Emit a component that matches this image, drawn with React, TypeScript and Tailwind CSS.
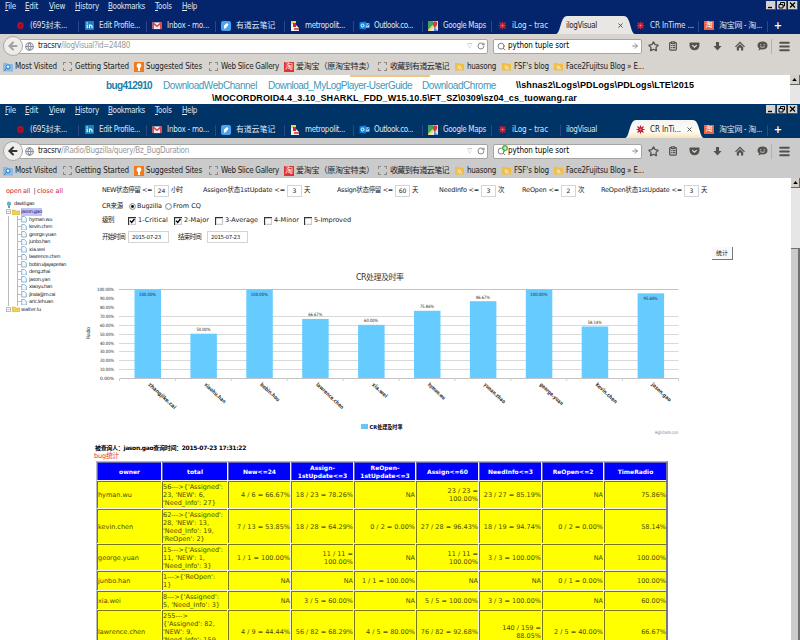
import React, { useLayoutEffect, useRef, useState } from "react";
import {
  Star,
  ClipboardList,
  Menu,
  Search,
  RotateCw,
  ArrowRight,
  ArrowLeft,
  Globe,
  X,
} from "lucide-react";

const UI = "font-['DejaVu_Sans_Condensed','DejaVu_Sans','Noto_Sans_CJK_SC',sans-serif]";
const VERDANA = "font-['DejaVu_Sans','Noto_Sans_CJK_SC',sans-serif]";

/* One line of text whose tracking is adjusted so that it fills a given width. */
function Fit({ w, children, className = "" }: { w: number; children: string; className?: string }) {
  const ref = useRef<HTMLSpanElement>(null);
  const [gap, setGap] = useState(0);
  useLayoutEffect(() => {
    const el = ref.current;
    if (el) setGap((w - el.getBoundingClientRect().width) / children.length);
  }, [w, children]);
  return (
    <span className={`block shrink-0 whitespace-pre ${className}`} style={{ width: w }}>
      <span ref={ref} className="inline-block" style={{ letterSpacing: gap }}>
        {children}
      </span>
    </span>
  );
}

function TabIcon({ kind }: { kind: string }) {
  switch (kind) {
    case "weibo":
      return (
        <svg viewBox="0 0 10 10" className="h-[9px] w-[9px]">
          <path d="M2 2 4 1l4 1 .5 3L8 8 5 9.3 2 8 1.5 5z" fill="#b3122a" />
          <path d="M3.5 4.5h3M4 7h2" stroke="#5e0a30" />
        </svg>
      );
    case "linkedin":
      return (
        <svg viewBox="0 0 10 10" className="h-[9px] w-[9px]">
          <rect width="10" height="10" rx="1" fill="#1583bb" />
          <path d="M2.4 4v4M5 8V4M5 6q0-1.6 1.4-1.6T7.8 6v2" stroke="#fff" strokeWidth="1.3" fill="none" />
          <circle cx="2.4" cy="2.2" r=".8" fill="#fff" />
        </svg>
      );
    case "mail":
      return (
        <svg viewBox="0 0 10 10" className="h-[9px] w-[10px]">
          <rect y="1.5" width="10" height="7.5" fill="#f4e9ea" />
          <path d="M.8 9V2.4L5 6l4.200-3.600V9" stroke="#d8424a" strokeWidth="1.6" fill="none" />
        </svg>
      );
    case "note":
      return (
        <svg viewBox="0 0 10 10" className="h-[10px] w-[10px]">
          <rect width="10" height="10" rx="2" fill="#4aa3f0" />
          <path d="M3 8V4.500L6 2l1.500 1.500L5 7z" fill="#fff" />
        </svg>
      );
    case "metro":
      return (
        <svg viewBox="0 0 10 10" className="h-[10px] w-[10px]">
          <path d="M1 0h5v4H1z" fill="#e9d64a" />
          <path d="M1 3h4l4 4v3H1z" fill="#f5f0f0" />
          <path d="M3 2h3v4H3z" fill="#d22a2a" />
          <path d="M4 8h5" stroke="#c33" strokeWidth="1.500" />
        </svg>
      );
    case "outlook":
      return (
        <svg viewBox="0 0 11 10" className="h-[9px] w-[11px]">
          <path d="M6 2.500h5v5H6z" fill="#9ed0f5" />
          <path d="M6 3l2.500 2L11 3" stroke="#0a5aa8" fill="none" />
          <path d="M0 1.500 7 .500v9l-7-1z" fill="#1384dc" />
          <circle cx="3.400" cy="5" r="1.600" stroke="#fff" strokeWidth="1.100" fill="none" />
        </svg>
      );
    case "maps":
      return (
        <svg viewBox="0 0 10 10" className="h-[10px] w-[10px]">
          <rect width="10" height="10" fill="#e9e6dc" />
          <path d="M0 0h5v5L0 9z" fill="#43a35c" />
          <path d="M0 10 9 1" stroke="#f0d257" strokeWidth="1.800" />
          <path d="M6 10V6l4 4z" fill="#5a8fe0" />
          <circle cx="7" cy="2.600" r="2.300" fill="#da3b35" />
          <path d="M5.200 4h3.600L7 7.500z" fill="#da3b35" />
        </svg>
      );
    case "paw":
      return (
        <svg viewBox="0 0 10 10" className="h-[9px] w-[9px]">
          <path d="M5 .5v9M.5 5h9M1.700 1.700l6.600 6.600M8.300 1.700l-6.600 6.600" stroke="#b5233c" strokeWidth="1.300" />
          <circle cx="5" cy="5" r="2.800" fill="#c32a3e" />
          <circle cx="5" cy="5" r=".8" fill="#e8a0a8" />
        </svg>
      );
    case "taobao":
      return (
        <span className="flex h-[9px] w-[10px] items-center justify-center bg-[#ee6244] text-[7px] leading-none text-white">淘</span>
      );
    default:
      return null;
  }
}

const TABS: [string, string, number, number][] = [
  ["weibo", "(695封未...", 37, 69],
  ["linkedin", "Edit Profile...", 41, 68],
  ["mail", "Inbox - mo...", 42, 69],
  ["note", "有道云笔记", 39, 69],
  ["metro", "metropolit...", 40, 69],
  ["outlook", "Outlook.co...", 39, 69],
  ["maps", "Google Maps", 43, 69],
  ["paw", "iLog – trac", 36, 69],
  ["", "ilogVisual", 31, 69],
  ["paw", "CR InTime ...", 44, 69],
  ["taobao", "淘宝网 - 淘...", 43, 69],
];

const MENUS: [string, number, number][] = [
  ["File", 11, 20],
  ["Edit", 13, 24],
  ["View", 16, 26],
  ["History", 24, 33],
  ["Bookmarks", 37, 47],
  ["Tools", 17, 27],
  ["Help", 15, 20],
];

function Chrome({ second = false }: { second?: boolean }) {
  const active = second ? 9 : 8;
  return (
    <header className={`w-full shrink-0 text-[8px] leading-[10px] ${UI} ${second ? "h-[74px]" : "h-[75px]"}`}>
      <div className={`h-[34px] text-[#dfe5f3] ${second ? "bg-[#003366]" : "bg-[#04246b]"}`}>
        <div className="flex h-[16px] items-start justify-between pl-[5px]">
          <div className="flex pt-[2px]">
            {MENUS.map(([t, w, cell]) => (
              <div key={t} style={{ width: cell }}>
                <Fit w={w} className="*:first-letter:underline">{t}</Fit>
              </div>
            ))}
          </div>
          <div className="flex gap-[1px] pt-[1px] pr-[2px] text-black">
            {[0, 1, 2].map((i) => (
              <svg key={i} viewBox="0 0 10 9" className="h-[9px] w-[10px]">
                <path d="M0 0h10v9H0z" fill="#d6d3ce" />
                <path d="M0 8.500h10M9.500 0v9" stroke="#555" />
                {i === 0 && <path d="M2 6.500h4" stroke="#000" strokeWidth="1.300" />}
                {i === 1 && <path d="M3.500 3V1.500h4v3.500H6M2 3.500h4V7H2z" stroke="#000" fill="none" />}
                {i === 2 && <path d="M2 1.500l5 5M7 1.500l-5 5" stroke="#000" strokeWidth="1.300" />}
              </svg>
            ))}
          </div>
        </div>
        <div className="flex h-[18px] pl-[10px]">
          {TABS.map(([kind, text, w, cell], i) => {
            const on = i === active;
            return (
              <div key={i} className="relative flex h-[18px] shrink-0 items-center pt-[1px]" style={{ width: cell }}>
                {on && (
                  <svg viewBox="0 0 78 18" preserveAspectRatio="none" className="absolute -left-[5px] top-0 h-[18px] w-[79px]">
                    <defs>
                      <linearGradient id="warmTab" x1="0" y1="0" x2="0" y2="1">
                        <stop offset="0" stopColor="#f4f4f4" />
                        <stop offset=".65" stopColor="#fdfcf6" />
                        <stop offset="1" stopColor="#fbe2b4" />
                      </linearGradient>
                    </defs>
                    <path d="M0 18C5 17 4 0 11 0H67C74 0 73 17 78 18z" fill={second ? "url(#warmTab)" : "#e9e7e4"} />
                  </svg>
                )}
                {!on && i !== active - 1 && <span className="absolute right-0 top-[5px] h-[11px] w-px bg-[#2b4788]" />}
                <span className={`relative flex shrink-0 items-center justify-center ${kind ? "w-[20px]" : "w-[5px]"}`}>
                  <TabIcon kind={kind} />
                </span>
                <Fit w={on && second ? 31 : w} className={`relative ${on ? "text-[#222]" : ""}`}>
                  {on && second ? "CR InTi..." : text}
                </Fit>
                {on && <X className="absolute right-[6px] top-[6px] h-[7px] w-[7px] text-[#444]" strokeWidth={3} />}
              </div>
            );
          })}
          <span className="flex w-[20px] items-center justify-center pt-[1px] text-[11px] font-bold text-white">+</span>
        </div>
      </div>

      <div className={second ? "h-[40px] bg-[#cbcbcb] pt-[1px]" : "h-[41px] bg-[#d7d4cf]"}>
        <div className="flex h-[24px] items-center pl-[3px]">
          <div className="z-10 flex h-[20px] w-[20px] items-center justify-center rounded-full border border-[#aaa8a4] bg-[#eeedeb]">
            <ArrowLeft className={`h-[12px] w-[12px] ${second ? "text-[#333]" : "text-[#a5a39f]"}`} strokeWidth={4} />
          </div>
          <div className="-ml-[4px] flex h-[15px] w-[469px] items-center rounded-r-[2px] border border-[#a7a5a1] bg-white pl-[5px] pr-[2px] text-[#999]">
            <Globe className="h-[9px] w-[9px] text-[#8b8f97]" strokeWidth={3} />
            <Fit w={23} className="ml-[4px] text-[#222]">tracsrv</Fit>
            {second ? <Fit w={128}>/iRadio/Bugzilla/query/Bz_BugDuration</Fit> : <Fit w={69}>/ilogVisual?id=24480</Fit>}
            <span className="ml-auto mr-[5px] text-[7px] text-[#aaa]">▽</span>
            <RotateCw className="h-[8px] w-[8px] text-[#888]" strokeWidth={3} />
          </div>
          <div className="ml-[5px] flex h-[15px] w-[149px] items-center rounded-[2px] border border-[#a7a5a1] bg-white pl-[3px] pr-[2px]">
            <span className="relative">
              <Search className="h-[9px] w-[9px] -scale-x-100 rotate-0 text-[#777] scale-x-100" strokeWidth={2.5} />
              {second && (
                <span className="absolute -right-[2px] -top-[2px] flex h-[6px] w-[6px] items-center justify-center rounded-full bg-[#50b83c] text-[6px] font-bold leading-none text-white">+</span>
              )}
            </span>
            <Fit w={61} className="ml-[2px] text-black">python tuple sort</Fit>
            <ArrowRight className="ml-auto h-[8px] w-[8px] text-[#777]" strokeWidth={2.5} />
          </div>
          <div className="flex flex-1 items-center pl-[6px] text-[#55524e]">
            <span className="w-[19.500px]"><Star className="h-[11px] w-[11px]" strokeWidth={2.8} /></span>
            <span className="w-[21px]"><ClipboardList className="h-[10px] w-[10px]" strokeWidth={3} /></span>
            <span className="w-[24px]">
              <svg viewBox="0 0 11 10" className="h-[9px] w-[11px]">
                <path d="M1 .5h9q1 0 1 1V4a5.500 5.300 0 0 1-11 0V1.500q0-1 1-1z" fill="currentColor" />
                <path d="M3 3.500l2.500 2.300L8 3.500" stroke="#e5e3e0" strokeWidth="1.300" fill="none" />
              </svg>
            </span>
            <span className="w-[22px]">
              <svg viewBox="0 0 10 10" className="h-[9px] w-[9px]">
                <path d="M3.300 0h3.400v4.500H9.500L5 9.500.5 4.500h2.800z" fill="currentColor" />
              </svg>
            </span>
            <span className="w-[22px]">
              <svg viewBox="0 0 10 10" className="h-[10px] w-[10px]">
                <path d="M5 .5 10 5.400l-.9.800L5 2.300.9 6.200 0 5.400z" fill="currentColor" />
                <path d="M1.800 6.200 5 3.200l3.200 3v3.300H6V6.800H4v2.700H1.800z" fill="currentColor" />
              </svg>
            </span>
            <span className="w-[14px]">
              <svg viewBox="0 0 11 10" className="h-[10px] w-[11px]">
                <path d="M5.500.5c3 0 5 1.600 5 4s-2 4-5 4q-.8 0-1.500-.2L1.500 9.500l.6-2.200C1 6.600.5 5.600.5 4.500c0-2.400 2-4 5-4z" fill="currentColor" />
                <path d="M3 3.800h1.300M6.700 3.800H8M3.200 5.700q2.300 1.300 4.600 0" stroke="#d8d5d0" strokeWidth=".9" fill="none" />
              </svg>
            </span>
            <span className="h-[15px] w-px bg-[#b4b1ad]" />
            <Menu className="ml-[6px] h-[13px] w-[13px]" strokeWidth={3.5} />
          </div>
        </div>
        <div className={`flex items-center pl-[2px] text-[#1c1c1c] ${second ? "h-[15px]" : "h-[17px]"}`}>
          <Bookmark kind="visited" text="Most Visited" w={42} cell={60} />
          <Bookmark kind="blank" text="Getting Started" w={54} cell={71} />
          <Bookmark kind="bulb" text="Suggested Sites" w={56} cell={75} />
          <Bookmark kind="blank" text="Web Slice Gallery" w={58} cell={75} />
          <Bookmark kind="tao" text="爱淘宝（原淘宝特卖）" w={78} cell={94} />
          <Bookmark kind="blank" text="收藏到有道云笔记" w={59} cell={77} />
          <Bookmark kind="rss" text="huasong" w={29} cell={47} />
          <Bookmark kind="rss" text="FSF's blog" w={35} cell={52} />
          <Bookmark kind="rss" text="Face2Fujitsu Blog » E..." w={78} cell={100} />
        </div>
      </div>
    </header>
  );
}

function Bookmark({ kind, text, w, cell }: { kind: string; text: string; w: number; cell: number }) {
  return (
    <div className="flex shrink-0 items-center" style={{ width: cell }}>
      <span className="flex w-[13px] shrink-0 items-center pl-px">
        {kind === "blank" && <span className="h-[9px] w-[9px] border border-dashed border-[#8c8a86]" />}
        {kind === "visited" && (
          <svg viewBox="0 0 10 10" className="h-[10px] w-[10px]">
            <path d="M0 1h4l1 1h5v7.500H0z" fill="#86bbe8" />
            <circle cx="5" cy="4.800" r="2" fill="#d9ecfa" stroke="#3978b5" />
            <path d="M3.600 6.300 1.500 8.600" stroke="#3978b5" />
          </svg>
        )}
        {kind === "bulb" && (
          <svg viewBox="0 0 10 10" className="h-[10px] w-[10px]">
            <path d="M0 0h10v10H0z" fill="#f07a1c" />
            <circle cx="5" cy="3.700" r="2.400" fill="#fff" />
            <path d="M4 5h2v4H4z" fill="#fff" />
          </svg>
        )}
        {kind === "tao" && (
          <span className="flex h-[10px] w-[10px] items-center justify-center bg-[#e0303a] text-[8px] leading-none text-white">淘</span>
        )}
        {kind === "rss" && (
          <svg viewBox="0 0 10 10" className="h-[9px] w-[9px]">
            <path d="M0 1h4l1 1h5v7.500H0z" fill="#f0bd45" />
            <path d="M3 4.200a4 4 0 0 1 4 4M3 6.200a2 2 0 0 1 2 2" stroke="#fff6d8" fill="none" />
          </svg>
        )}
      </span>
      <Fit w={w}>{text}</Fit>
    </div>
  );
}

function ScrollUp() {
  return (
    <div className="flex h-[10px] w-full items-center justify-center border-b border-r border-[#666] bg-[#d4d0c8]">
      <svg viewBox="0 0 6 4" className="h-[3px] w-[5px]"><path d="M3 0 6 4H0z" /></svg>
    </div>
  );
}

const CHILDREN: [string, number][] = [
  ["hyman.wu", 23],
  ["kevin.chen", 23],
  ["george.yuan", 27],
  ["junbo.han", 21],
  ["xia.wei", 16],
  ["lawrence.chen", 31],
  ["bobin.vijayaperian", 37],
  ["deng.zhai", 21],
  ["jason.yan", 21],
  ["xiaoyu.han", 23],
  ["jinxia@m.cai", 26],
  ["aric.lehuan", 24],
];

function Folder() {
  return (
    <svg viewBox="0 0 8 6" className="h-[6px] w-[8px]">
      <path d="M0 1h3l1 1h4v4H0z" fill="#ecd45c" stroke="#c9ab35" strokeWidth=".5" />
    </svg>
  );
}

function Expander() {
  return (
    <svg viewBox="0 0 5 5" className="mr-px h-[5px] w-[5px]">
      <path d="M.5.500h4v4h-4zM1.500 2.500h2" stroke="#999" strokeWidth=".7" fill="none" />
    </svg>
  );
}

function Tree() {
  return (
    <aside className={`w-[96px] shrink-0 pl-[6px] pt-[9px] text-[5px] leading-[7.5px] text-[#222] ${VERDANA}`}>
      <div className="flex h-[9px] items-center text-[6.5px] text-[#cc2936]">
        <Fit w={24}>open all</Fit>
        <Fit w={7} className="text-[#333]"> |</Fit>
        <Fit w={26}>close all</Fit>
      </div>
      <div className="mt-[4px] flex h-[8px] items-center">
        <svg viewBox="0 0 6 8" className="h-[7px] w-[6px]">
          <circle cx="3" cy="3" r="2.500" fill="#5fb3d6" />
          <path d="M2 5h2v3H2z" fill="#6b8b9a" />
        </svg>
        <Fit w={20} className="ml-[2px]">david.gao</Fit>
      </div>
      <div className="flex h-[7.500px] items-center">
        <Expander />
        <Folder />
        <Fit w={21} className="ml-px bg-[#c5c3f2] text-[#1b1b70]">jason.gao</Fit>
      </div>
      <div className="ml-[2px] border-l border-[#bbb]">
        <div className="ml-[8px] border-l border-[#bbb]">
          {CHILDREN.map(([n, w]) => (
            <div key={n} className="flex h-[7.500px] items-center">
              <span className="w-[3px] border-t border-[#bbb]" />
              <svg viewBox="0 0 6 7" className="h-[6.500px] w-[6px]">
                <path d="M.5.500h3l2 2v4h-5z" fill="#f4faff" stroke="#6d9cc0" strokeWidth=".8" />
              </svg>
              <Fit w={w} className="ml-[2px]">{n}</Fit>
            </div>
          ))}
        </div>
      </div>
      <div className="flex h-[7.500px] items-center">
        <Expander />
        <Folder />
        <Fit w={20} className="ml-px">walter.lu</Fit>
      </div>
    </aside>
  );
}

function Num({ v }: { v: string }) {
  return (
    <span className="mx-[2px] flex h-[12px] w-[15px] shrink-0 items-center justify-center border border-[#d5d5d5] text-[6px] text-[#222]">
      {v}
    </span>
  );
}

function Check({ on, text, w, cell }: { on?: boolean; text: string; w: number; cell: number }) {
  return (
    <div className="flex items-center" style={{ width: cell }}>
      <svg viewBox="0 0 7 7" className="mr-[2px] h-[8px] w-[8px]">
        <path d="M.5 7V.5H7" stroke="#333" fill="none" />
        <path d="M6.500 1v5.500H1" stroke="#ccc" fill="none" />
        {on && <path d="M1.800 3.200l1.400 1.600L5.700 1.800" stroke="#000" strokeWidth="1.200" fill="none" />}
      </svg>
      <Fit w={w}>{text}</Fit>
    </div>
  );
}

function Radio({ on, text, w, cell }: { on?: boolean; text: string; w: number; cell: number }) {
  return (
    <div className="flex items-center" style={{ width: cell }}>
      <svg viewBox="0 0 7 7" className="mr-[1px] h-[7px] w-[7px]">
        <circle cx="3.500" cy="3.500" r="2.900" stroke="#777" fill="#fff" strokeWidth=".9" />
        {on && <circle cx="3.500" cy="3.500" r="1.400" />}
      </svg>
      <Fit w={w}>{text}</Fit>
    </div>
  );
}

function Filters() {
  return (
    <section className="h-[84px] pl-[6px] pt-[6px] text-[6.5px] leading-[9px] text-[#222]">
      <div className="flex h-[13px] items-center">
        <Fit w={50}>{"NEW状态停留 <="}</Fit>
        <Num v="24" />
        <Fit w={11}>小时</Fit>
        <Fit w={82} className="ml-[21px]">{"Assigen状态1stUpdate <="}</Fit>
        <Num v="3" />
        <Fit w={6}>天</Fit>
        <Fit w={56} className="ml-[27px]">{"Assign状态停留 <="}</Fit>
        <Num v="60" />
        <Fit w={6}>天</Fit>
        <Fit w={40} className="ml-[21px]">{"NeedInfo <="}</Fit>
        <Num v="3" />
        <Fit w={6}>次</Fit>
        <Fit w={37} className="ml-[18px]">{"ReOpen <="}</Fit>
        <Num v="2" />
        <Fit w={6}>次</Fit>
        <Fit w={81} className="ml-[17px]">{"ReOpen状态1stUpdate <="}</Fit>
        <Num v="3" />
        <Fit w={6}>天</Fit>
      </div>
      <div className="mt-[3px] flex h-[13px] items-center">
        <Fit w={21} className="mr-[6px]">CR来源</Fit>
        <Radio on text="Bugzilla" w={25} cell={36} />
        <Radio text="From CQ" w={28} cell={40} />
      </div>
      <div className="flex h-[15px] items-center">
        <Fit w={12} className="mr-[14px]">级别</Fit>
        <Check on text="1-Critical" w={30} cell={46} />
        <Check on text="2-Major" w={25} cell={41} />
        <Check text="3-Average" w={33} cell={49} />
        <Check text="4-Minor" w={25} cell={40} />
        <Check text="5-Improved" w={37} cell={50} />
      </div>
      <div className="mt-[3px] flex h-[12px] items-center">
        <Fit w={23} className="mr-[3px]">开始时间</Fit>
        <span className="flex h-[12px] w-[41px] items-center border border-[#d5d5d5] pl-[3px] text-[5.500px]"><Fit w={29}>2015-07-23</Fit></span>
        <Fit w={23} className="ml-[9px] mr-[6px]">结束时间</Fit>
        <span className="flex h-[12px] w-[41px] items-center border border-[#d5d5d5] pl-[3px] text-[5.500px]"><Fit w={29}>2015-07-23</Fit></span>
      </div>
      <div className="flex justify-end pr-[58px] pt-[4px]">
        <button className="h-[13px] w-[21px] border-b border-r border-[#777] bg-[#fafafa] text-[6px] leading-[10px]">统计</button>
      </div>
    </section>
  );
}

const BARS: [string, number, string][] = [
  ["zhangjike.cai", 100, "100.00%"],
  ["xiaohu.han", 50, "50.00%"],
  ["bobin.hou", 100, "100.00%"],
  ["lawrence.chen", 66.67, "66.67%"],
  ["xia.wei", 60, "60.00%"],
  ["hyman.wu", 75.86, "75.86%"],
  ["yunan.zhao", 86.67, "86.67%"],
  ["george.yuan", 100, "100.00%"],
  ["kevin.chen", 58.14, "58.14%"],
  ["jason.gao", 95.6, "95.60%"],
];

function Chart() {
  return (
    <svg viewBox="80 262 620 178" className="-ml-[16px] block h-[178px] w-[620px] font-['DejaVu_Sans','Noto_Sans_CJK_SC',sans-serif]">
      <text x="380" y="279.500" fontSize="8" textAnchor="middle" textLength="48" fill="#333">CR处理及时率</text>
      <text transform="translate(90 339) rotate(-90)" fontSize="5" fill="#444" textLength="12">Radio</text>
      {[0, 10, 20, 30, 40, 50, 60, 70, 80, 90, 100].map((v) => {
        const y = 378 - v * 0.886;
        return (
          <g key={v}>
            {v !== 80 && v !== 90 && <path d={`M119 ${Math.round(y) + 0.5}H678.500`} stroke={v === 0 || v === 100 ? "#c4c4c4" : "#d9d9d9"} />}
            <text x="114" y={y + 2} fontSize="4.500" textAnchor="end" textLength={v === 100 ? 17 : 14} lengthAdjust="spacingAndGlyphs" fill="#222">{`${v}.00%`}</text>
          </g>
        );
      })}
      {BARS.map(([name, v, label], i) => {
        const x = 134.5 + i * 55.9;
        const y = 378 - v * 0.886;
        return (
          <g key={i}>
            <path d={`M${119.5 + i * 55.9} 378v3`} stroke="#d0d0d0" />
            <rect x={x} y={y} width="26.500" height={378 - y} fill="#66ccff" />
            <text x={x + 13} y={v > 90 ? y + 6.5 : y - 2.5} fontSize="4.500" textAnchor="middle" textLength={v === 100 ? 17 : 14} lengthAdjust="spacingAndGlyphs" fill="#222">{label}</text>
            <text transform={`translate(${x + 13.5} 385) rotate(43)`} fontSize="5.300" fontWeight="bold" textLength={name.length * 2.75} lengthAdjust="spacingAndGlyphs" fill="#333">{name}</text>
          </g>
        );
      })}
      <path d="M678.500 378v3" stroke="#d0d0d0" />
      <rect x="361" y="424" width="7" height="5" fill="#66c6f5" />
      <text x="369.500" y="428.500" fontSize="5.300" fontWeight="bold" textLength="33" lengthAdjust="spacingAndGlyphs">CR处理及时率</text>
      <text x="655" y="434" fontSize="4.500" fill="#777" textLength="23" lengthAdjust="spacingAndGlyphs">Highcharts.com</text>
    </svg>
  );
}

const HEAD = ["owner", "total", "New<=24", "Assign-\n1stUpdate<=3", "ReOpen-\n1stUpdate<=3", "Assign<=60", "NeedInfo<=3", "ReOpen<=2", "TimeRadio"];
const ROWS: [number, string[]][] = [
  [28, ["hyman.wu", "56--->{'Assigned':\n23, 'NEW': 6,\n'Need_Info': 27}", "4 / 6 = 66.67%", "18 / 23 = 78.26%", "NA", "23 / 23 =\n100.00%", "23 / 27 = 85.19%", "NA", "75.86%"]],
  [35, ["kevin.chen", "62--->{'Assigned':\n28, 'NEW': 13,\n'Need_Info': 19,\n'ReOpen': 2}", "7 / 13 = 53.85%", "18 / 28 = 64.29%", "0 / 2 = 0.00%", "27 / 28 = 96.43%", "18 / 19 = 94.74%", "0 / 2 = 0.00%", "58.14%"]],
  [27, ["george.yuan", "15--->{'Assigned':\n11, 'NEW': 1,\n'Need_Info': 3}", "1 / 1 = 100.00%", "11 / 11 =\n100.00%", "NA", "11 / 11 =\n100.00%", "3 / 3 = 100.00%", "NA", "100.00%"]],
  [20, ["junbo.han", "1--->{'ReOpen':\n1}", "NA", "NA", "1 / 1 = 100.00%", "NA", "NA", "0 / 1 = 0.00%", "100.00%"]],
  [19, ["xia.wei", "8--->{'Assigned':\n5, 'Need_Info': 3}", "NA", "3 / 5 = 60.00%", "NA", "5 / 5 = 100.00%", "3 / 3 = 100.00%", "NA", "60.00%"]],
  [43, ["lawrence.chen", "255--->\n{'Assigned': 82,\n'NEW': 9,\n'Need_Info': 159,\n'ReOpen': 5}", "4 / 9 = 44.44%", "56 / 82 = 68.29%", "4 / 5 = 80.00%", "76 / 82 = 92.68%", "140 / 159 =\n88.05%", "2 / 5 = 40.00%", "66.67%"]],
];
const COLS = "grid grid-cols-[65px_66px_63px_63px_62px_63px_63px_62px_63px]";

function Report() {
  return (
    <section className="text-[6.5px]">
      <div className="-ml-px flex h-[9px] items-center text-[6px] font-bold text-black"><Fit w={151}>被查询人：jason.gao查询时间：2015-07-23 17:31:22</Fit></div>
      <div className="-ml-[2px] flex h-[9px] items-center text-[#e03030]"><Fit w={25}>bug统计</Fit></div>
      <div className="w-[572px] border border-r-2 border-[#b9b9c6] border-r-[#77778a] bg-[#f2f2f8] leading-[8px]">
        <div className={`h-[19px] font-bold text-white ${COLS}`}>
          {HEAD.map((h) => (
            <div key={h} className="mb-px mr-px flex items-center justify-center whitespace-pre border-l border-t border-[#6666b0] bg-[#0000ff] text-center text-[6px] leading-[8px]">{h}</div>
          ))}
        </div>
        {ROWS.map(([h, cells]) => (
          <div key={cells[0]} className={COLS} style={{ height: h }}>
            {cells.map((c, i) => (
              <div key={i} className={`mb-px mr-px flex items-center whitespace-pre border-l border-t border-[#77771a] bg-[#ffff00] text-[#4a4a00] ${i < 2 ? "justify-start text-left" : "justify-end text-right"}`}>{c}</div>
            ))}
          </div>
        ))}
      </div>
    </section>
  );
}

export default function App() {
  return (
    <div className="flex h-[640px] w-[800px] flex-col overflow-hidden bg-white">
      <Chrome />
      <div className="flex h-[29px] shrink-0 font-['Liberation_Sans',Arial,sans-serif] text-[10px] leading-[13px] text-[#4299b9]">
        <div className="flex-1">
          <div className="ml-[350px] h-[2px] w-[80px] bg-[#efc48a]" />
          <div className="mt-[1px] flex h-[14px] items-center pl-[106px]">
            <Fit w={46} className="mr-[11px] font-bold text-[#187fa8]">bug412910</Fit>
            <Fit w={94} className="mr-[11px]">DownloadWebChannel</Fit>
            <Fit w={144} className="mr-[10px]">Download_MyLogPlayer-UserGuide</Fit>
            <Fit w={74} className="mr-[20px]">DownloadChrome</Fit>
            <Fit w={178} className="text-[9px] font-bold text-black">{"\\\\shnas2\\Logs\\PDLogs\\PDLogs\\LTE\\2015"}</Fit>
          </div>
          <div className="flex h-[12px] items-center pl-[212px] text-[9px] font-bold text-black">
            <Fit w={365}>{"\\MOCORDROID4.4_3.10_SHARKL_FDD_W15.10.5\\FT_SZ\\0309\\sz04_cs_tuowang.rar"}</Fit>
          </div>
        </div>
        <div className="w-[10px] bg-[#e6e6e6]"><ScrollUp /></div>
      </div>
      <Chrome second />
      <div className={`flex h-[462px] shrink-0 overflow-hidden ${VERDANA}`}>
        <Tree />
        <main className="w-[695px] shrink-0">
          <Filters />
          <Chart />
          <div className="mt-[3px]"><Report /></div>
        </main>
        <div className="flex w-[9px] flex-col bg-[#e6e6e6]">
          <ScrollUp />
          <div className="mt-[60px] flex-1 border-r-2 border-t border-[#707070] bg-[#cbcbcb]" />
        </div>
      </div>
    </div>
  );
}
